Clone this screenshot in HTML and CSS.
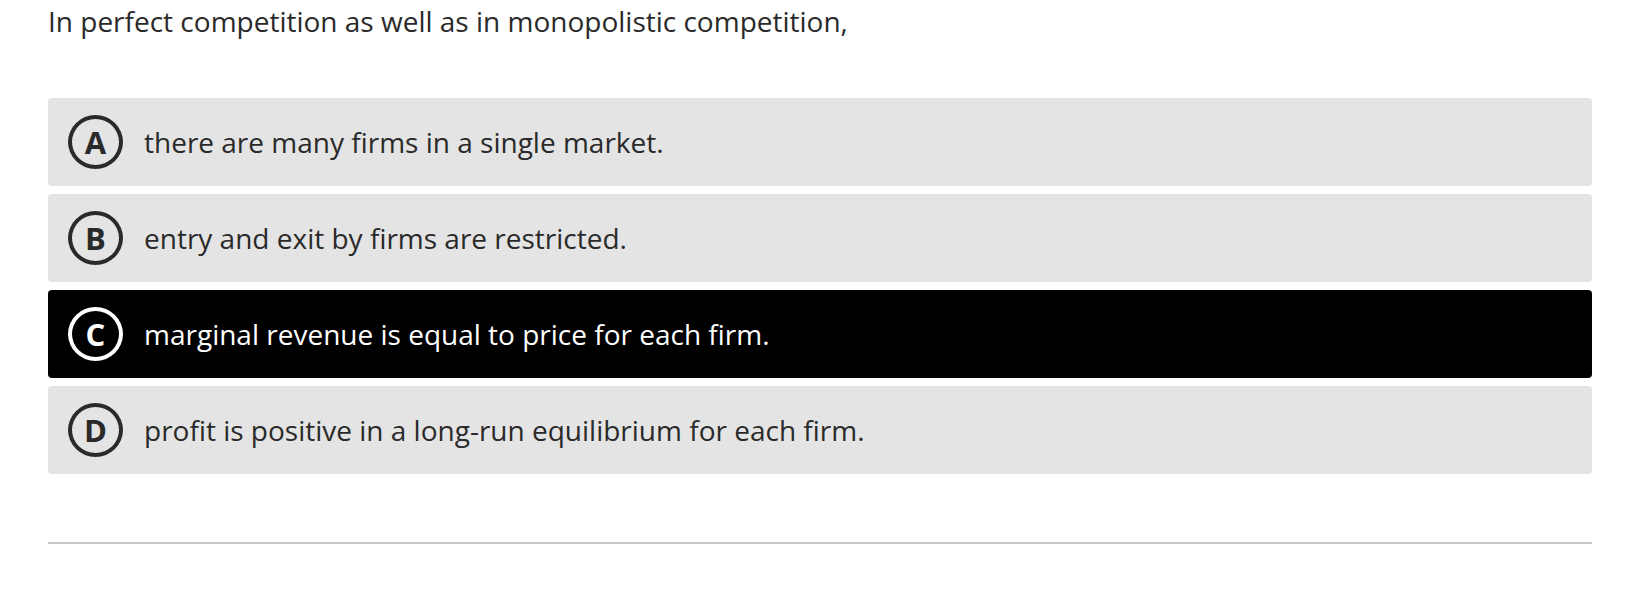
FILE: index.html
```html
<!DOCTYPE html>
<html lang="en">
<head>
<meta charset="utf-8">
<title>Question</title>
<link rel="stylesheet" href="styles.css">
</head>
<body>
<main class="quiz">
  <p class="question">In perfect competition as well as in monopolistic competition,</p>
  <ul class="options">
    <li class="option"><span class="badge">A</span><span class="label">there are many firms in a single market.</span></li>
    <li class="option"><span class="badge">B</span><span class="label">entry and exit by firms are restricted.</span></li>
    <li class="option selected"><span class="badge">C</span><span class="label">marginal revenue is equal to price for each firm.</span></li>
    <li class="option"><span class="badge">D</span><span class="label">profit is positive in a long-run equilibrium for each firm.</span></li>
  </ul>
  <hr class="divider">
</main>
</body>
</html>
```

FILE: styles.css
```css
* { box-sizing: border-box; }
html, body { margin: 0; padding: 0; background: #fff; }
body {
  font-family: "Open Sans", "Liberation Sans", sans-serif;
  color: #2a2a2a;
}
.quiz {
  width: 1592px;
  padding: 2px 0 0 48px;
}
.question {
  margin: 0;
  font-size: 28px;
  line-height: 38px;
}
.options {
  list-style: none;
  margin: 58px 0 0 0;
  padding: 0;
  display: flex;
  flex-direction: column;
  gap: 8px;
}
.option {
  height: 88px;
  background: #e4e4e4;
  border-radius: 4px;
  display: flex;
  align-items: center;
  padding-left: 20px;
  gap: 21px;
  font-size: 28px;
}
.option.selected {
  background: #000;
  color: #fff;
}
.badge {
  width: 55px;
  height: 54px;
  border: 4px solid currentColor;
  border-radius: 50%;
  display: flex;
  align-items: center;
  justify-content: center;
  font-weight: 700;
  font-size: 31px;
  line-height: 1;
  flex: none;
}
.label {
  line-height: 38px;
}
.divider {
  margin: 68px 0 0 0;
  border: 0;
  height: 2px;
  background: #c8c8c8;
}
```
